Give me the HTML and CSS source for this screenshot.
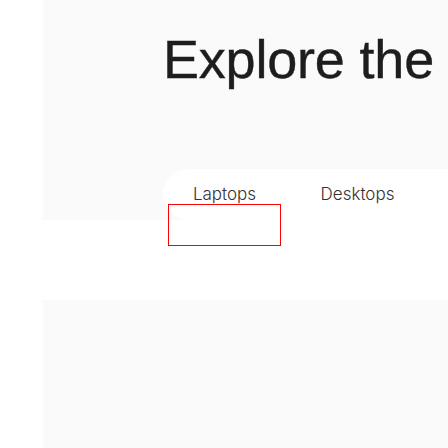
FILE: index.html
```html
<!DOCTYPE html>
<html lang="en">
<head>
<meta charset="utf-8">
<title>Explore</title>
<link rel="stylesheet" href="styles.css">
</head>
<body>
<main class="page">
  <section class="hero">
    <h1 class="hero-title">Explore the</h1>
    <nav class="tabs">
      <div class="tab tab-active">
        <span class="tab-label">Laptops</span>
        <span class="tab-focus"></span>
      </div>
      <div class="tab">
        <span class="tab-label">Desktops</span>
      </div>
    </nav>
  </section>
  <div class="spacer"></div>
  <section class="panel"></section>
</main>
</body>
</html>
```
FILE: styles.css
```css
html, body {
  margin: 0;
  padding: 0;
  background: #ffffff;
  overflow: hidden;
}
body {
  width: 448px;
  height: 448px;
}
.page {
  padding-left: 43px;
  display: flex;
  flex-direction: column;
}
.hero {
  background: #fafafa;
  height: 220px;
  padding-left: 120px;
  box-sizing: border-box;
  padding-top: 32px;
  display: flex;
  flex-direction: column;
}
.hero-title {
  margin: 0;
  font-family: "Liberation Sans", Arial, sans-serif;
  font-size: 54px;
  line-height: 54px;
  font-weight: 400;
  color: #1d1d1f;
  white-space: nowrap;
  letter-spacing: -0.2px;
  -webkit-text-stroke: 0.4px #1d1d1f;
}
.tabs {
  margin-top: 83px;
  height: 51px;
  box-sizing: border-box;
  background: #ffffff;
  border-radius: 26px 0 0 26px;
  padding: 13px 0 0 5px;
  display: flex;
  gap: 20px;
}
.tab {
  position: relative;
  width: 113px;
  height: 24px;
  display: flex;
  justify-content: center;
}
.tab-label {
  font-family: Inter, "Noto Sans", sans-serif;
  font-size: 17px;
  line-height: 24px;
  font-weight: 300;
  color: #333333;
  white-space: nowrap;
}
.tab-focus {
  position: absolute;
  left: 0;
  top: 22px;
  width: 113px;
  height: 42px;
  box-sizing: border-box;
  border: 1px solid #ff0000;
}
.spacer {
  height: 80px;
}
.panel {
  background: #fafafa;
  height: 148px;
}
```
